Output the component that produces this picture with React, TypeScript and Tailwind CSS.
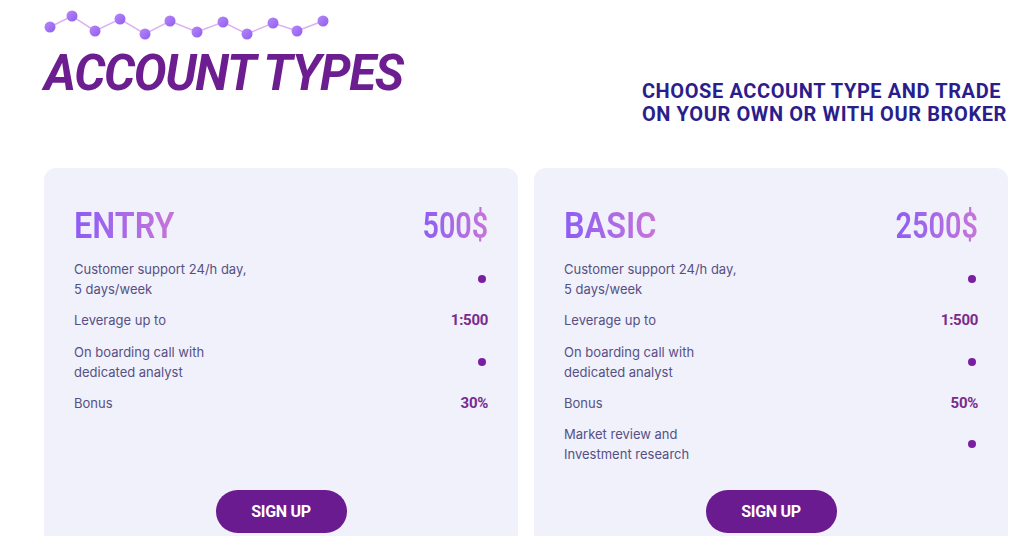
const rows = {
  entry: [
    { label: ['Customer support 24/h day,', '5 days/week'], value: null },
    { label: ['Leverage up to'], value: '1:500' },
    { label: ['On boarding call with', 'dedicated analyst'], value: null },
    { label: ['Bonus'], value: '30%' },
  ],
  basic: [
    { label: ['Customer support 24/h day,', '5 days/week'], value: null },
    { label: ['Leverage up to'], value: '1:500' },
    { label: ['On boarding call with', 'dedicated analyst'], value: null },
    { label: ['Bonus'], value: '50%' },
    { label: ['Market review and', 'Investment research'], value: null },
  ],
};

type Row = { label: string[]; value: string | null };

const dots: [number, number][] = [
  [10, 19], [32, 8], [55, 23], [80, 11], [105, 26], [130, 13],
  [157, 24], [183, 14], [207, 26], [233, 15], [257, 23], [283, 13],
];

const Chain = () => (
  <svg width="300" height="36" viewBox="0 0 300 36" className="-ml-[4px]">
    <defs>
      <linearGradient id="dot" x1="0" y1="0" x2="1" y2="1">
        <stop offset="0" stopColor="#b789f7" />
        <stop offset="1" stopColor="#8f5cf0" />
      </linearGradient>
    </defs>
    <polyline
      points={dots.map(([x, y]) => `${x},${y}`).join(' ')}
      fill="none"
      stroke="#dcb0f2"
      strokeWidth="1.5"
    />
    {dots.map(([x, y], i) => (
      <circle key={i} cx={x} cy={y} r="5.5" fill="url(#dot)" />
    ))}
  </svg>
);

const Card = ({ name, price, items }: { name: string; price: string; items: Row[] }) => (
  <div className="flex h-[368px] w-[474px] shrink-0 flex-col rounded-t-xl bg-[#f0f1fa] px-[30px] pt-[38px]">
    {/* Heading */}
    <div className="flex items-center justify-between font-['Roboto',sans-serif] text-[36px] font-semibold leading-10">
      <span className="origin-left scale-x-90 bg-gradient-to-r from-[#8d5cf5] to-[#c774d8] bg-clip-text text-transparent">
        {name}
      </span>
      <span className="origin-right scale-x-80 bg-gradient-to-r from-[#8d5cf5] to-[#c774d8] bg-clip-text text-transparent">
        {price}
      </span>
    </div>

    {/* Features */}
    <div className="mt-[13px] flex flex-col gap-[10px]">
      {items.map((row, i) => (
        <div key={i} className="flex items-center justify-between">
          <p className="font-['Inter',sans-serif] text-[13px] leading-5 text-[#565084]">
            {row.label.map((l, j) => (
              <span key={j} className="block">{l}</span>
            ))}
          </p>
          {row.value ? (
            <span className="font-['Roboto',sans-serif] text-[15px] font-bold tracking-[-0.3px] text-[#7a2a8e]">
              {row.value}
            </span>
          ) : (
            <span className="mr-[2px] h-[8px] w-[8px] rounded-full bg-[#7b1fa2]" />
          )}
        </div>
      ))}
    </div>

    <button className="mx-auto mb-[3px] mt-auto h-[43px] w-[131px] rounded-full bg-[#6a1b8f] font-['Roboto',sans-serif] text-[16px] font-bold tracking-[-0.3px] text-white">
      SIGN UP
    </button>
  </div>
);

export default function App() {
  return (
    <div className="h-[558px] w-[1021px] overflow-hidden bg-white">
      <div className="flex h-[98px] items-start justify-between pl-[44px] pr-[14px]">
        <div className="pt-[8px]">
          <Chain />
          <h1 className="mt-[5px] font-['Roboto',sans-serif] text-[49px] font-bold italic leading-none tracking-[-1.3px] text-[#6c1d90]">
            ACCOUNT TYPES
          </h1>
        </div>
        <p className="mt-[80px] font-['Roboto',sans-serif] text-[20px] font-bold leading-[23px] tracking-[0.6px] text-[#2b1e8c]">
          CHOOSE ACCOUNT TYPE AND TRADE
          <br />
          ON YOUR OWN OR WITH OUR BROKER
        </p>
      </div>

      <div className="mt-[70px] flex gap-4 pl-[44px] pr-[13px]">
        <Card name="ENTRY" price="500$" items={rows.entry} />
        <Card name="BASIC" price="2500$" items={rows.basic} />
      </div>
    </div>
  );
}
